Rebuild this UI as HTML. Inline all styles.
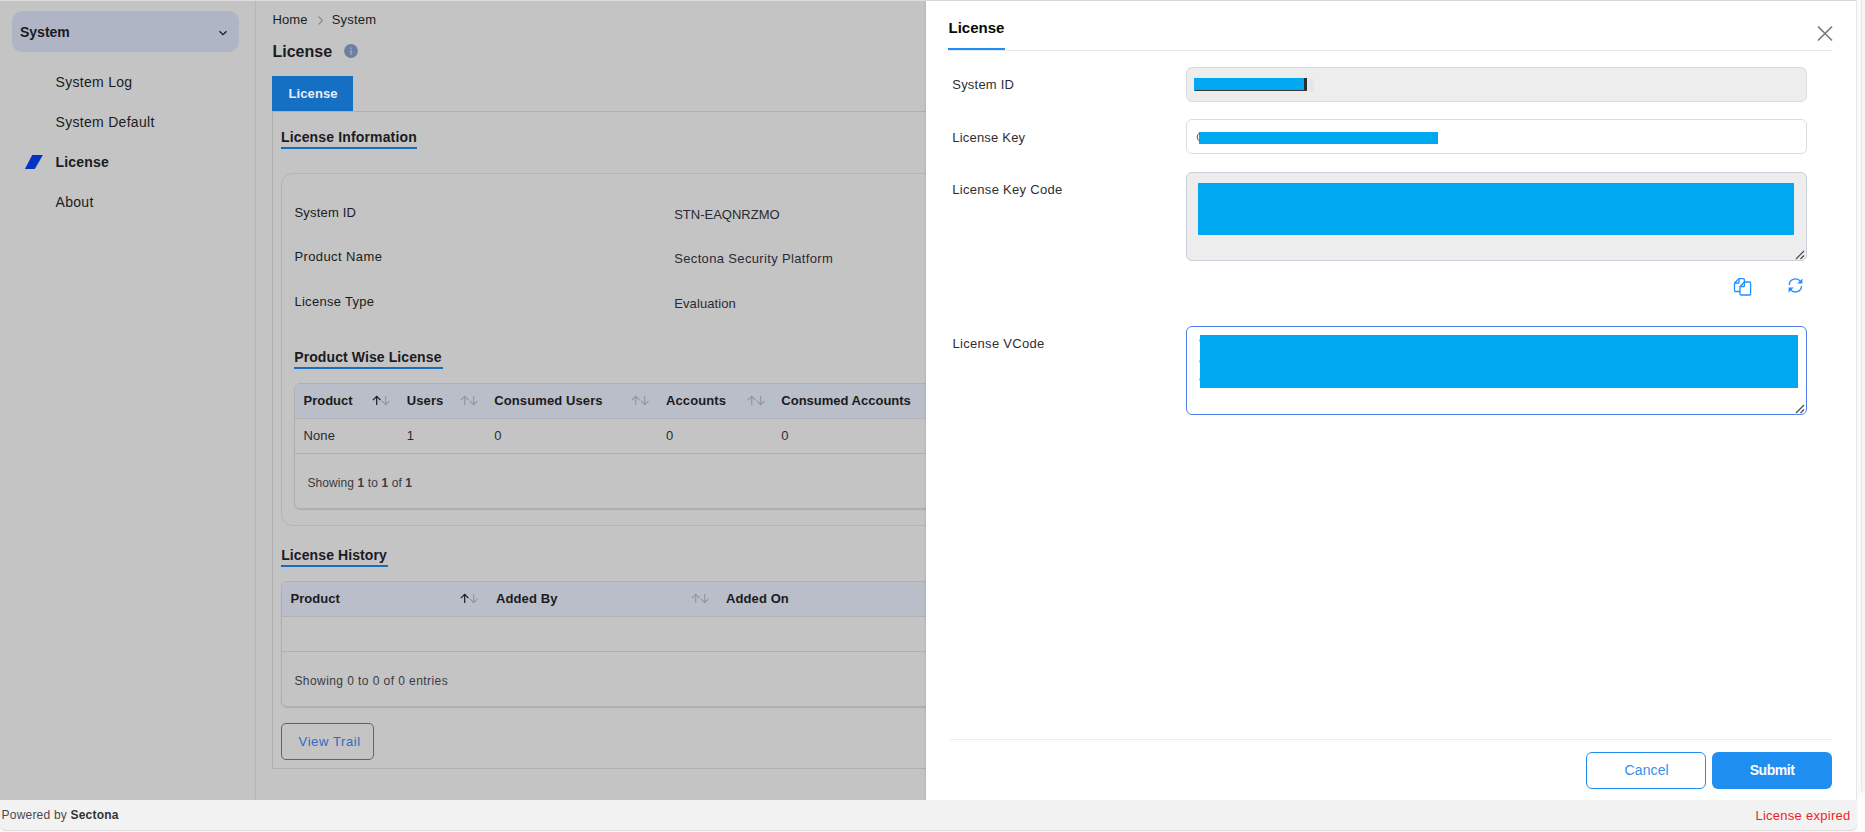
<!DOCTYPE html>
<html><head><meta charset="utf-8"><style>
html,body{margin:0;padding:0;width:1865px;height:832px;overflow:hidden;background:#fcfcfc}
body{position:relative;font-family:"Liberation Sans",sans-serif}
.t{position:absolute;white-space:nowrap;line-height:1}
b{font-weight:700}
</style></head><body>
<div style="position:absolute;left:0px;top:0px;width:1865px;height:832px;background:#fcfcfc"></div>
<div style="position:absolute;left:0px;top:0px;width:1857px;height:800px;background:#c4c4c4"></div>
<div style="position:absolute;left:0px;top:0px;width:1857px;height:1px;background:#dedede"></div>
<div style="position:absolute;left:255px;top:1px;width:1px;height:799px;background:#b5b5b5"></div>
<div style="position:absolute;left:12px;top:11px;width:227px;height:41px;background:#afb5c4;border-radius:10px"></div>
<div class="t" style="left:20px;top:25.35px;font-size:14px;font-weight:700;color:#1b1b22;letter-spacing:0px;">System</div>
<svg style="position:absolute;left:218px;top:29px" width="10" height="8" viewBox="0 0 10 8"><path d="M1.5 2.2 L5 5.6 L8.5 2.2" fill="none" stroke="#1b1b22" stroke-width="1.3"/></svg>
<div class="t" style="left:55.5px;top:75.45px;font-size:14px;font-weight:400;color:#1b1b22;letter-spacing:0.3px;">System Log</div>
<div class="t" style="left:55.5px;top:115.45px;font-size:14px;font-weight:400;color:#1b1b22;letter-spacing:0.3px;">System Default</div>
<div class="t" style="left:55.5px;top:155.15px;font-size:14px;font-weight:700;color:#1b1b22;letter-spacing:0.2px;">License</div>
<div class="t" style="left:55.5px;top:195.15px;font-size:14px;font-weight:400;color:#1b1b22;letter-spacing:0.3px;">About</div>
<svg style="position:absolute;left:24px;top:154px" width="20" height="16" viewBox="0 0 20 16"><path d="M8.2 1 L18.9 1 L10.8 14.9 L0.9 14.9 Z" fill="#0434c6"/></svg>
<div class="t" style="left:272.5px;top:13.00px;font-size:13px;font-weight:400;color:#1b1b22;letter-spacing:0.1px;">Home</div>
<svg style="position:absolute;left:316px;top:15px" width="9" height="11" viewBox="0 0 9 11"><path d="M2.5 1.5 L6.5 5.5 L2.5 9.5" fill="none" stroke="#8a8a8e" stroke-width="1.1"/></svg>
<div class="t" style="left:331.7px;top:13.00px;font-size:13px;font-weight:400;color:#1b1b22;letter-spacing:0.2px;">System</div>
<div class="t" style="left:272.5px;top:43.56px;font-size:16px;font-weight:700;color:#1b1b22;letter-spacing:0px;">License</div>
<svg style="position:absolute;left:344px;top:44px" width="14" height="14" viewBox="0 0 14 14"><circle cx="7" cy="7" r="6.9" fill="#6d7fa3"/><rect x="6.35" y="3.6" width="1.3" height="1.3" fill="#aab6ca"/><rect x="6.4" y="6" width="1.2" height="4.8" fill="#aab6ca"/></svg>
<div style="position:absolute;left:272px;top:76px;width:81px;height:35px;background:#1570c4"></div>
<div class="t" style="left:288.5px;top:87.00px;font-size:13px;font-weight:700;color:#e8eef6;letter-spacing:0.1px;">License</div>
<div style="position:absolute;left:272px;top:111px;width:700px;height:658px;border:1px solid #afafaf;border-right:none;box-sizing:border-box"></div>
<div class="t" style="left:281px;top:130.45px;font-size:14px;font-weight:700;color:#1b1b22;letter-spacing:0.15px;">License Information</div>
<div style="position:absolute;left:281px;top:147px;width:136px;height:2px;background:#1a6cc0"></div>
<div style="position:absolute;left:281px;top:173px;width:700px;height:353px;border:1px solid #b3b3b3;border-radius:12px;box-sizing:border-box"></div>
<div class="t" style="left:294.4px;top:206.10px;font-size:13px;font-weight:400;color:#1b1b22;letter-spacing:0.2px;">System ID</div>
<div class="t" style="left:294.4px;top:250.00px;font-size:13px;font-weight:400;color:#1b1b22;letter-spacing:0.4px;">Product Name</div>
<div class="t" style="left:294.4px;top:295.20px;font-size:13px;font-weight:400;color:#1b1b22;letter-spacing:0.3px;">License Type</div>
<div class="t" style="left:674.2px;top:207.90px;font-size:13px;font-weight:400;color:#2a2a33;letter-spacing:0px;">STN-EAQNRZMO</div>
<div class="t" style="left:674.2px;top:252.10px;font-size:13px;font-weight:400;color:#2a2a33;letter-spacing:0.35px;">Sectona Security Platform</div>
<div class="t" style="left:674.2px;top:297.00px;font-size:13px;font-weight:400;color:#2a2a33;letter-spacing:0.1px;">Evaluation</div>
<div class="t" style="left:294.2px;top:350.35px;font-size:14px;font-weight:700;color:#1b1b22;letter-spacing:0.1px;">Product Wise License</div>
<div style="position:absolute;left:294px;top:367px;width:149px;height:2px;background:#1a6cc0"></div>
<div style="position:absolute;left:294px;top:383px;width:700px;height:126px;border:1px solid #b0b0b0;border-radius:6px;box-sizing:border-box;box-shadow:0 1px 1px rgba(0,0,0,0.12)"></div>
<div style="position:absolute;left:295px;top:384px;width:700px;height:34px;background:#b9bec8;border-top-left-radius:5px"></div>
<div style="position:absolute;left:295px;top:418px;width:700px;height:1px;background:#b0b3b8"></div>
<div style="position:absolute;left:295px;top:453px;width:700px;height:1px;background:#b0b0b0"></div>
<div class="t" style="left:303.5px;top:393.70px;font-size:13px;font-weight:700;color:#1b1b22;letter-spacing:0px;">Product</div>
<div class="t" style="left:406.8px;top:393.70px;font-size:13px;font-weight:700;color:#1b1b22;letter-spacing:0.1px;">Users</div>
<div class="t" style="left:494.3px;top:393.70px;font-size:13px;font-weight:700;color:#1b1b22;letter-spacing:0.1px;">Consumed Users</div>
<div class="t" style="left:666px;top:393.70px;font-size:13px;font-weight:700;color:#1b1b22;letter-spacing:0.1px;">Accounts</div>
<div class="t" style="left:781.3px;top:393.70px;font-size:13px;font-weight:700;color:#1b1b22;letter-spacing:0px;">Consumed Accounts</div>
<svg style="position:absolute;left:372px;top:395px" width="19" height="11" viewBox="0 0 19 11"><path d="M4.7 10 V1.3 M0.9 5.1 L4.7 1.3 L8.5 5.1" fill="none" stroke="#1b1b22" stroke-width="1.2"/><path d="M13.7 1 V9.7 M9.9 5.9 L13.7 9.7 L17.5 5.9" fill="none" stroke="#92979f" stroke-width="1.2"/></svg>
<svg style="position:absolute;left:460px;top:395px" width="19" height="11" viewBox="0 0 19 11"><path d="M4.7 10 V1.3 M0.9 5.1 L4.7 1.3 L8.5 5.1" fill="none" stroke="#92979f" stroke-width="1.2"/><path d="M13.7 1 V9.7 M9.9 5.9 L13.7 9.7 L17.5 5.9" fill="none" stroke="#92979f" stroke-width="1.2"/></svg>
<svg style="position:absolute;left:631px;top:395px" width="19" height="11" viewBox="0 0 19 11"><path d="M4.7 10 V1.3 M0.9 5.1 L4.7 1.3 L8.5 5.1" fill="none" stroke="#92979f" stroke-width="1.2"/><path d="M13.7 1 V9.7 M9.9 5.9 L13.7 9.7 L17.5 5.9" fill="none" stroke="#92979f" stroke-width="1.2"/></svg>
<svg style="position:absolute;left:747px;top:395px" width="19" height="11" viewBox="0 0 19 11"><path d="M4.7 10 V1.3 M0.9 5.1 L4.7 1.3 L8.5 5.1" fill="none" stroke="#92979f" stroke-width="1.2"/><path d="M13.7 1 V9.7 M9.9 5.9 L13.7 9.7 L17.5 5.9" fill="none" stroke="#92979f" stroke-width="1.2"/></svg>
<div class="t" style="left:303.5px;top:429.00px;font-size:13px;font-weight:400;color:#2a2a33;letter-spacing:0.1px;">None</div>
<div class="t" style="left:406.8px;top:429.00px;font-size:13px;font-weight:400;color:#2a2a33;letter-spacing:0px;">1</div>
<div class="t" style="left:494.3px;top:429.00px;font-size:13px;font-weight:400;color:#2a2a33;letter-spacing:0px;">0</div>
<div class="t" style="left:666px;top:429.00px;font-size:13px;font-weight:400;color:#2a2a33;letter-spacing:0px;">0</div>
<div class="t" style="left:781.3px;top:429.00px;font-size:13px;font-weight:400;color:#2a2a33;letter-spacing:0px;">0</div>
<div class="t" style="left:307.4px;top:476.74px;font-size:12px;font-weight:400;color:#3a3a42;letter-spacing:0.1px;">Showing <b>1</b> to <b>1</b> of <b>1</b></div>
<div class="t" style="left:281.2px;top:548.15px;font-size:14px;font-weight:700;color:#1b1b22;letter-spacing:0.1px;">License History</div>
<div style="position:absolute;left:281px;top:565px;width:107px;height:2px;background:#1a6cc0"></div>
<div style="position:absolute;left:281px;top:581px;width:700px;height:126px;border:1px solid #b0b0b0;border-radius:6px;box-sizing:border-box;box-shadow:0 1px 1px rgba(0,0,0,0.12)"></div>
<div style="position:absolute;left:282px;top:582px;width:700px;height:34px;background:#b9bec8;border-top-left-radius:5px"></div>
<div style="position:absolute;left:282px;top:616px;width:700px;height:1px;background:#b0b3b8"></div>
<div style="position:absolute;left:282px;top:651px;width:700px;height:1px;background:#b0b0b0"></div>
<div class="t" style="left:290.6px;top:591.60px;font-size:13px;font-weight:700;color:#1b1b22;letter-spacing:0px;">Product</div>
<svg style="position:absolute;left:460px;top:593px" width="19" height="11" viewBox="0 0 19 11"><path d="M4.7 10 V1.3 M0.9 5.1 L4.7 1.3 L8.5 5.1" fill="none" stroke="#1b1b22" stroke-width="1.2"/><path d="M13.7 1 V9.7 M9.9 5.9 L13.7 9.7 L17.5 5.9" fill="none" stroke="#92979f" stroke-width="1.2"/></svg>
<div class="t" style="left:496px;top:591.60px;font-size:13px;font-weight:700;color:#1b1b22;letter-spacing:0.1px;">Added By</div>
<svg style="position:absolute;left:691px;top:593px" width="19" height="11" viewBox="0 0 19 11"><path d="M4.7 10 V1.3 M0.9 5.1 L4.7 1.3 L8.5 5.1" fill="none" stroke="#92979f" stroke-width="1.2"/><path d="M13.7 1 V9.7 M9.9 5.9 L13.7 9.7 L17.5 5.9" fill="none" stroke="#92979f" stroke-width="1.2"/></svg>
<div class="t" style="left:726px;top:591.60px;font-size:13px;font-weight:700;color:#1b1b22;letter-spacing:0.1px;">Added On</div>
<div class="t" style="left:294.4px;top:674.64px;font-size:12px;font-weight:400;color:#3a3a42;letter-spacing:0.43px;">Showing 0 to 0 of 0 entries</div>
<div style="position:absolute;left:281px;top:723px;width:93px;height:37px;border:1px solid #2c6fc0;border-radius:5px;box-sizing:border-box"></div>
<div class="t" style="left:298.6px;top:735.20px;font-size:13px;font-weight:400;color:#2d6cc0;letter-spacing:0.6px;">View Trail</div>
<div style="position:absolute;left:926px;top:1px;width:931px;height:799px;background:#ffffff;box-shadow:-1px 0 2px rgba(0,0,0,0.08)"></div>
<div class="t" style="left:948.5px;top:20.40px;font-size:15px;font-weight:700;color:#0a0a0a;letter-spacing:0px;">License</div>
<div style="position:absolute;left:948px;top:50px;width:884px;height:1px;background:#e6eaf0"></div>
<div style="position:absolute;left:948px;top:48px;width:57px;height:2px;background:#1e8ff0"></div>
<svg style="position:absolute;left:1816px;top:24px" width="18" height="18" viewBox="0 0 18 18"><path d="M2 2.5 L16 16.5 M16 2.5 L2 16.5" fill="none" stroke="#7a7a7a" stroke-width="1.7"/></svg>
<div class="t" style="left:952.3px;top:78.40px;font-size:13px;font-weight:400;color:#2e2e36;letter-spacing:0.2px;">System ID</div>
<div class="t" style="left:952.3px;top:131.30px;font-size:13px;font-weight:400;color:#2e2e36;letter-spacing:0.2px;">License Key</div>
<div class="t" style="left:952.3px;top:182.60px;font-size:13px;font-weight:400;color:#2e2e36;letter-spacing:0.3px;">License Key Code</div>
<div class="t" style="left:952.5px;top:337.00px;font-size:13px;font-weight:400;color:#2e2e36;letter-spacing:0.3px;">License VCode</div>
<div style="position:absolute;left:1186px;top:67px;width:621px;height:35px;background:#ededed;border:1px solid #dcdcdc;border-radius:6px;box-sizing:border-box"></div>
<div style="position:absolute;left:1307px;top:79px;width:7px;height:13px;background:#e3e8ec"></div>
<div style="position:absolute;left:1194px;top:78px;width:113px;height:13px;background:#00a8f2"></div>
<div style="position:absolute;left:1304px;top:78px;width:3px;height:13px;background:#2e2e2e"></div>
<div style="position:absolute;left:1195px;top:90px;width:112px;height:1px;background:#3a3a3a"></div>
<div style="position:absolute;left:1186px;top:119px;width:621px;height:35px;background:#fff;border:1px solid #dcdcdc;border-radius:6px;box-sizing:border-box"></div>
<div style="position:absolute;left:1199px;top:132px;width:239px;height:12px;background:#00a8f2"></div>
<svg style="position:absolute;left:1196px;top:132px" width="4" height="10" viewBox="0 0 4 10"><path d="M3.5 1 Q1.2 2.5 1.2 5 Q1.2 7.5 3.5 9" fill="none" stroke="#6a4a60" stroke-width="1"/></svg>
<div style="position:absolute;left:1186px;top:172px;width:621px;height:89px;background:#ededed;border:1px solid #c8cfd8;border-radius:6px;box-sizing:border-box"></div>
<div style="position:absolute;left:1198px;top:183px;width:596px;height:52px;background:#00a8f2"></div>
<svg style="position:absolute;left:1795px;top:250px" width="10" height="10" viewBox="0 0 10 10"><path d="M1 9 L9 1 M5.5 9 L9 5.5" fill="none" stroke="#444" stroke-width="1.1"/></svg>
<svg style="position:absolute;left:1732px;top:276px" width="21" height="21" viewBox="0 0 21 21"><g fill="none" stroke="#1e8fff" stroke-width="1.3" stroke-linejoin="round"><path d="M2.5 7 L7 2.6 H11.2 Q12.4 2.6 12.4 3.8 V6.4"/><path d="M2.5 7 V14.4 Q2.5 15.5 3.6 15.5 H8"/><path d="M2.6 7 H6.6 Q7 7 7 6.6 V2.8"/><path d="M8 10.5 L12.3 6 H17.4 Q18.6 6 18.6 7.2 V17.8 Q18.6 19 17.4 19 H9.2 Q8 19 8 17.8 Z"/><path d="M8.2 10.5 H12 Q12.3 10.5 12.3 10.2 V6.2"/></g></svg>
<svg style="position:absolute;left:1786px;top:276px" width="19" height="19" viewBox="0 0 19 19"><g fill="none" stroke="#1e8fff" stroke-width="1.4"><path d="M3.3 9 A6.2 6.2 0 0 1 14.6 5.6"/><path d="M15.6 10 A6.2 6.2 0 0 1 4.4 13.4"/></g><path d="M16.4 2.5 V7.6 H11.4 Z" fill="#1e8fff"/><path d="M2.6 16.5 V11.4 H7.6 Z" fill="#1e8fff"/></svg>
<div style="position:absolute;left:1186px;top:326px;width:621px;height:89px;background:#fff;border:1px solid #4f80ee;border-radius:6px;box-sizing:border-box"></div>
<div style="position:absolute;left:1199px;top:339px;width:1px;height:3px;background:#f3c08a"></div>
<div style="position:absolute;left:1199px;top:360px;width:1px;height:3px;background:#f3c08a"></div>
<div style="position:absolute;left:1199px;top:378px;width:1px;height:3px;background:#f3c08a"></div>
<div style="position:absolute;left:1200px;top:335px;width:598px;height:53px;background:#00a8f2"></div>
<svg style="position:absolute;left:1795px;top:404px" width="10" height="10" viewBox="0 0 10 10"><path d="M1 9 L9 1 M5.5 9 L9 5.5" fill="none" stroke="#444" stroke-width="1.1"/></svg>
<div style="position:absolute;left:950px;top:739px;width:882px;height:1px;background:#e9ecf0"></div>
<div style="position:absolute;left:1586px;top:752px;width:120px;height:37px;border:1px solid #1e8ff0;border-radius:6px;box-sizing:border-box;background:#fff"></div>
<div class="t" style="left:1624.6px;top:763.15px;font-size:14px;font-weight:400;color:#3a8ee8;letter-spacing:0.1px;">Cancel</div>
<div style="position:absolute;left:1712px;top:752px;width:120px;height:37px;background:#1e8ff0;border-radius:6px"></div>
<div class="t" style="left:1749.7px;top:763.15px;font-size:14px;font-weight:700;color:#ffffff;letter-spacing:-0.45px;">Submit</div>
<div style="position:absolute;left:0px;top:800px;width:1857px;height:30px;background:#f2f2f2;border-radius:0 0 6px 6px;box-shadow:0 1px 1px rgba(0,0,0,0.14)"></div>
<div class="t" style="left:1.6px;top:809.04px;font-size:12px;font-weight:400;color:#4a4a4a;letter-spacing:0.2px;">Powered by <span style="font-weight:700;color:#333">Sectona</span></div>
<div class="t" style="left:1755.4px;top:809.00px;font-size:13px;font-weight:400;color:#ee1d25;letter-spacing:0.27px;">License expired</div>
<div style="position:absolute;left:1856px;top:0px;width:1px;height:800px;background:#e6e6e6"></div>
<div style="position:absolute;left:1857px;top:0px;width:4px;height:793px;background:#f9f9f9"></div>
<div style="position:absolute;left:1861px;top:0px;width:4px;height:793px;background:#f5f5f5;border-left:1px solid #e6e6e6;border-bottom-left-radius:4px"></div>
</body></html>
